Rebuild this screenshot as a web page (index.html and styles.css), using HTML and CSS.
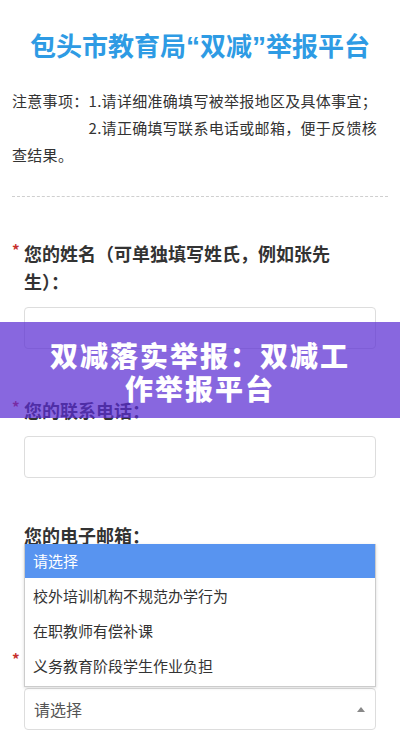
FILE: index.html
```html
<!DOCTYPE html>
<html lang="zh-CN">
<head>
<meta charset="utf-8">
<title>包头市教育局“双减”举报平台</title>
<link rel="stylesheet" href="styles.css">
</head>
<body>
<div class="page">
  <h1 class="title">包头市教育局<span class="quote">“</span>双减<span class="quote">”</span>举报平台</h1>
  <p class="notice">注意事项：1.请详细准确填写被举报地区及具体事宜；<br>　　　　　2.请正确填写联系电话或邮箱，便于反馈核查结果。</p>
  <div class="divider"></div>

  <div class="fields">
    <div class="field">
      <div class="label"><span class="req">*</span><span class="label-text narrow">您的姓名（可单独填写姓氏，例如张先生）：</span></div>
      <div class="input"></div>
    </div>

    <div class="field field-tight">
      <div class="label"><span class="req">*</span><span class="label-text">您的联系电话：</span></div>
      <div class="input"></div>
    </div>

    <div class="field field-menu">
      <div class="label"><span class="req"></span><span class="label-text">您的电子邮箱：</span></div>
      <div class="input"></div>
      <ul class="dropdown">
        <li class="option active">请选择</li>
        <li class="option">校外培训机构不规范办学行为</li>
        <li class="option">在职教师有偿补课</li>
        <li class="option">义务教育阶段学生作业负担</li>
      </ul>
    </div>

    <div class="field field-last">
      <div class="label"><span class="req">*</span><span class="label-text">举报类型：</span></div>
      <div class="input select"><span>请选择</span><span class="caret"></span></div>
    </div>
  </div>
</div>
<div class="banner">双减落实举报：双减工作举报平台</div>
</body>
</html>
```
FILE: styles.css
```css
html, body {
  margin: 0;
  padding: 0;
  background: #ffffff;
}
body {
  font-family: "Noto Sans CJK SC", "Noto Sans", sans-serif;
  color: #333333;
  width: 400px;
  height: 740px;
  overflow: hidden;
  position: relative;
}
.page {
  padding: 0 12px;
}
.title {
  margin: 0;
  padding-top: 27px;
  height: 40px;
  line-height: 36px;
  font-size: 26px;
  font-weight: 700;
  color: #2e9be4;
  text-align: center;
}
.quote {
  font-family: "Liberation Sans", "Noto Sans", sans-serif;
  font-size: 28px;
}
.notice {
  margin: 20px 0 0;
  font-size: 15px;
  line-height: 27px;
  letter-spacing: 0.3px;
  color: #333333;
}
.divider {
  margin-top: 28px;
  border-top: 1px dashed #cfcfcf;
}
.fields {
  padding: 42px 12px 0 0;
}
.field {
  position: relative;
  margin-bottom: 47px;
}
.field-tight {
  margin-bottom: 43px;
}
.field-menu {
  margin-bottom: 45px;
  z-index: 2;
}
.field-last {
  margin-bottom: 0;
}
.label {
  display: flex;
  align-items: flex-start;
  margin-bottom: 12px;
}
.req {
  flex: 0 0 12px;
  color: #c7302c;
  font-size: 15px;
  line-height: 22px;
  font-weight: 700;
}
.label-text {
  flex: 1;
  font-size: 18px;
  line-height: 28px;
  font-weight: 700;
  color: #333333;
}
.label-text.narrow {
  padding-right: 30px;
}
.input {
  margin-left: 12px;
  height: 40px;
  border: 1px solid #dddddd;
  border-radius: 4px;
  background: #ffffff;
}
.select {
  display: flex;
  align-items: center;
  justify-content: space-between;
  padding: 0 10px 0 9px;
  font-size: 16px;
  color: #555555;
}
.caret {
  width: 0;
  height: 0;
  border-left: 4px solid transparent;
  border-right: 4px solid transparent;
  border-bottom: 5px solid #888888;
}
.dropdown {
  position: absolute;
  left: 12px;
  right: 0;
  top: 23px;
  margin: 0;
  padding: 0 0 3px;
  list-style: none;
  background: #ffffff;
  border: 1px solid #cccccc;
  border-top: none;
  box-shadow: 0 1px 3px rgba(0, 0, 0, 0.15);
}
.option {
  height: 35px;
  line-height: 35px;
  padding-left: 8px;
  font-size: 15px;
  color: #333333;
}
.option.active {
  height: 34px;
  line-height: 34px;
  background: #5894f0;
  color: #ffffff;
}
.banner {
  position: absolute;
  left: 0;
  top: 322px;
  width: 400px;
  height: 96px;
  box-sizing: border-box;
  padding: 17px 45px 0;
  background: rgba(90, 45, 210, 0.72);
  color: #ffffff;
  font-size: 28px;
  line-height: 33px;
  font-weight: 900;
  letter-spacing: 2px;
  text-align: center;
  z-index: 5;
}
```
